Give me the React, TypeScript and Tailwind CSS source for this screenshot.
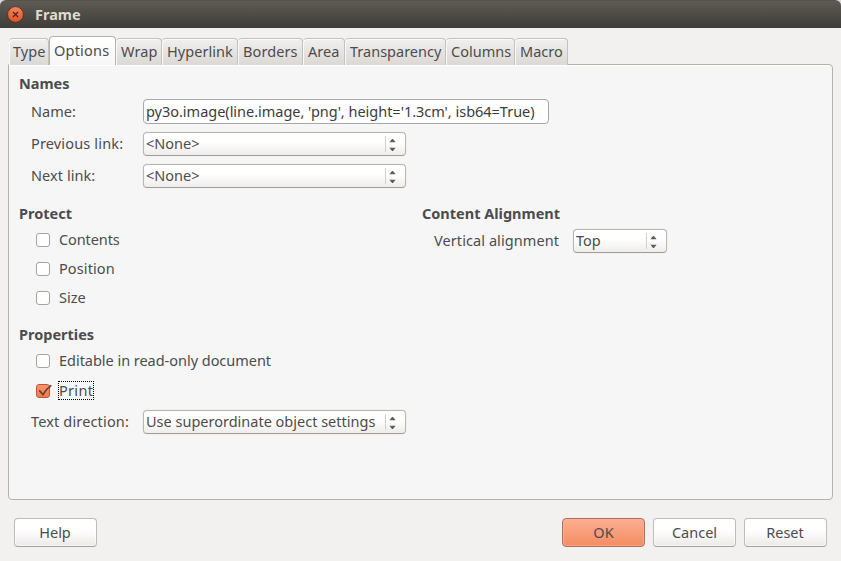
import type { ReactNode } from "react";

const tabs = [
  { label: "Type", box: "w-[40px] pl-[4px]", text: "tracking-[0.05px]" },
  { label: "Options", box: "w-[67px] pl-[4px]", text: "tracking-[0.2px]" },
  { label: "Wrap", box: "w-[46px] pl-[5px]", text: "tracking-[0.1px]" },
  { label: "Hyperlink", box: "w-[76px] pl-[5px]", text: "tracking-[0.05px]" },
  { label: "Borders", box: "w-[65px] pl-[5px]", text: "tracking-[0.1px]" },
  { label: "Area", box: "w-[42px] pl-[5px]", text: "" },
  { label: "Transparency", box: "w-[101px] pl-[5px]", text: "" },
  { label: "Columns", box: "w-[69px] pl-[5px]", text: "" },
  { label: "Macro", box: "w-[53px] pl-[5px]", text: "" },
];

function Tab({ label, box, text, active }: { label: string; box: string; text: string; active: boolean }) {
  return (
    <div
      className={`${box} z-10 flex shrink-0 rounded-t-[4px] border border-b-0 ${
        active
          ? "h-[29px] border-[#b6b1ab] bg-gradient-to-b from-white to-[#f6f6f6] pt-[3px] shadow-[inset_0_1px_0_white]"
          : "h-[27px] border-l-0 border-[#c4c0bc] bg-gradient-to-b from-[#f1f0ef] to-[#dbd8d5] pt-[2px] shadow-[inset_1px_1px_0_#fafafa]"
      } ${label === "Type" ? "border-l" : ""}`}
    >
      <span className={text}>{label}</span>
    </div>
  );
}

function Select({ box, text, children }: { box: string; text: string; children: ReactNode }) {
  return (
    <div
      className={`${box} flex h-6 items-center rounded-[4px] border border-[#b9b5b1] border-b-[#a29d98] bg-gradient-to-b from-white from-40% to-[#eeedec] pl-[2px] shadow-[0_0_0_1px_#f1f1f0]`}
    >
      <span className={`${text} pb-[2px]`}>{children}</span>
      <div className="ml-auto h-4 w-px bg-[#d2d0ce]" />
      <svg className="ml-[3px] mr-[9px] mt-[2px]" width="7" height="12" viewBox="0 0 7 12" fill="#5e5d5b">
        <path d="M.4 3.2 3 0h1l2.6 3.2zM.4 8.8h6.2L4 12H3z" />
      </svg>
    </div>
  );
}

function Check({ label, text, gap, checked }: { label: string; text: string; gap: string; checked?: boolean }) {
  return (
    <div className={`${gap} flex h-[14px] items-center pl-[27px]`}>
      <div
        className={`relative size-[14px] shrink-0 rounded-[3px] border ${
          checked
            ? "border-[#bd5632] bg-gradient-to-b from-[#f9936b] to-[#f27a4e]"
            : "border-[#a9a39e] bg-white"
        }`}
      >
        {checked && (
          <svg className="absolute -left-px -top-px" width="17" height="14" viewBox="0 0 17 14" fill="none">
            <path d="M3.2 6.4 7 10.6C9 7 11.5 4 15.3 1.4" stroke="#683f30" strokeWidth="1.7" />
          </svg>
        )}
      </div>
      <span
        className={`mb-px ml-[8px] h-[19px] shrink-0 whitespace-nowrap border border-dotted leading-[17px] ${
          checked ? "border-black" : "border-transparent"
        }`}
      >
        <span className={`${text} block`}>{label}</span>
      </span>
    </div>
  );
}

function Button({ label, text, gap, primary }: { label: string; text: string; gap: string; primary?: boolean }) {
  return (
    <button
      className={`${gap} flex h-[29px] w-[83px] items-center justify-center rounded-[4px] border ${
        primary
          ? "border-[#a9705b] bg-gradient-to-b from-[#fcae90] to-[#f48c64] shadow-[inset_0_0_0_1px_#fbb59999]"
          : "border-[#bfbbb8] border-b-[#a5a09b] bg-gradient-to-b from-white from-40% to-[#ebeae8] shadow-[inset_0_0_0_1px_#ffffff99]"
      }`}
    >
      <span className={`${text} pb-[2px]`}>{label}</span>
    </button>
  );
}

export default function App() {
  return (
    <div className="h-[561px] w-[841px] overflow-hidden bg-[#d8d8d8] font-['Noto_Sans',sans-serif] text-[14.5px] leading-5 whitespace-nowrap text-[#4c4c4c]">
      <header className="flex h-7 items-center rounded-t-[6px] border-t border-[#55534c] bg-gradient-to-b from-[#5e5b53] to-[#3e3d38] pl-[7px]">
        <svg width="17" height="17" viewBox="0 0 17 17">
          <defs>
            <linearGradient id="close" x1="0" y1="0" x2="0" y2="1">
              <stop offset="0" stopColor="#f58560" />
              <stop offset="1" stopColor="#e3501f" />
            </linearGradient>
          </defs>
          <circle cx="8.5" cy="8.5" r="7.9" fill="url(#close)" stroke="#34322d" strokeWidth="0.8" />
          <path d="M6 6l5 5M11 6l-5 5" stroke="#3e2b23" strokeWidth="1.2" />
        </svg>
        <span className="ml-[11px] pb-px font-bold text-[#dfdbd2]">Frame</span>
      </header>
      <main className="h-[533px] bg-[#f2f1f0] px-[8px] pt-[8px]">
        <nav className="flex h-[29px] items-end pl-px">
          {tabs.map((t) => (
            <Tab key={t.label} {...t} active={t.label === "Options"} />
          ))}
        </nav>
        <section className="-mt-px h-[436px] w-[825px] rounded-[4px] rounded-tl-none border border-[#b6b1ab] bg-[#f6f6f6] pl-[10px] pt-[8px] shadow-[inset_0_1px_0_white]">
          <h2 className="font-bold">Names</h2>
          <div className="mt-[6px] flex h-[25px] items-center pl-[12px]">
            <label className="w-[112px] pb-[2px]">Name:</label>
            <div className="flex h-[25px] w-[406px] items-center rounded-[4px] border border-[#aaa6a1] bg-white pl-[2px] text-[#3c3c3c]">
              <span className="pb-[2px] tracking-[-0.02px]">py3o.image(line.image, 'png', height='1.3cm', isb64=True)</span>
            </div>
          </div>
          <div className="mt-[8px] flex h-6 items-center pl-[12px]">
            <label className="w-[112px] pb-[2px] tracking-[0.16px]">Previous link:</label>
            <Select box="w-[263px]" text="">{"<None>"}</Select>
          </div>
          <div className="mt-[8px] flex h-6 items-center pl-[12px]">
            <label className="w-[112px] pb-[2px] tracking-[0.06px]">Next link:</label>
            <Select box="w-[263px]" text="">{"<None>"}</Select>
          </div>
          <div className="mt-[15px] flex">
            <div className="w-[403px]">
              <h2 className="font-bold">Protect</h2>
              <Check label="Contents" text="tracking-[-0.1px]" gap="mt-[10px] -ml-[10px]" />
              <Check label="Position" text="tracking-[0.1px]" gap="mt-[15px] -ml-[10px]" />
              <Check label="Size" text="" gap="mt-[15px] -ml-[10px]" />
            </div>
            <div>
              <h2 className="font-bold">Content Alignment</h2>
              <div className="mt-[6px] flex h-6 items-center pl-[12px]">
                <label className="w-[139px] pb-[2px] tracking-[0.08px]">Vertical alignment</label>
                <Select box="w-[94px]" text="">Top</Select>
              </div>
            </div>
          </div>
          <h2 className="mt-[19px] font-bold">Properties</h2>
          <Check label="Editable in read-only document" text="tracking-[-0.03px]" gap="mt-[10px] -ml-[10px]" />
          <Check label="Print" text="tracking-[0.3px]" gap="mt-[16px] -ml-[10px]" checked />
          <div className="mt-[12px] flex h-6 items-center pl-[12px]">
            <label className="w-[112px] pb-[2px] tracking-[0.15px]">Text direction:</label>
            <Select box="w-[263px]" text="">Use superordinate object settings</Select>
          </div>
        </section>
        <footer className="mt-[18px] flex pl-[6px]">
          <Button label="Help" text="pr-px" gap="" />
          <Button label="OK" text="" gap="ml-[465px]" primary />
          <Button label="Cancel" text="" gap="ml-[8px]" />
          <Button label="Reset" text="pr-px" gap="ml-[8px]" />
        </footer>
      </main>
    </div>
  );
}
